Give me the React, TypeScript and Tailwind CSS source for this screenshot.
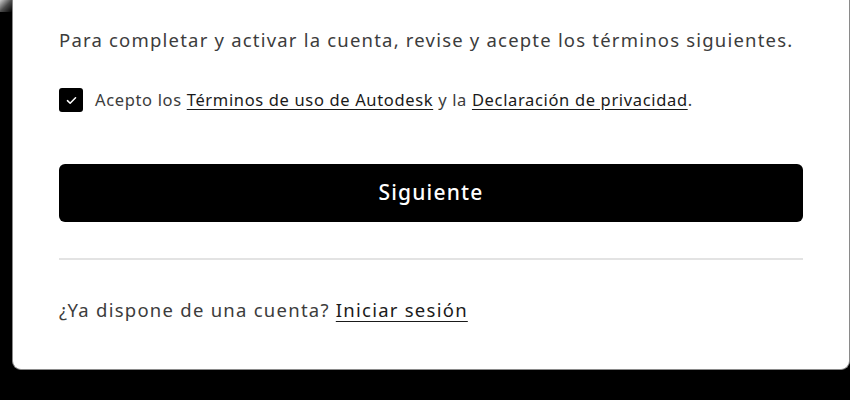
import React from "react";

export default function App() {
  return (
    <div className="w-[850px] h-[400px] bg-black overflow-hidden relative" style={{ fontFamily: '"Noto Sans", "Open Sans", sans-serif' }}>
      <div className="absolute left-0 top-0 w-[12px] h-[12px] bg-gradient-to-br from-white/80 via-white/30 to-transparent" />
      <div className="ml-[12px] mt-[-20px] w-[838px] h-[390px] bg-white rounded-b-[9px] border border-[#8a8a8a] border-t-0 pl-[46px] pr-[45px] pt-[47px]">
        <p className="text-[18.5px] leading-[26px] tracking-[1.2px] text-[#3c3c3c] whitespace-nowrap">
          Para completar y activar la cuenta, revise y acepte los términos siguientes.
        </p>
        <div className="mt-[35px] flex items-center gap-[12px]">
          <div className="w-[24px] h-[24px] rounded-[3px] bg-black flex items-center justify-center shrink-0">
            <svg width="11" height="9" viewBox="0 0 12 10" fill="none">
              <path d="M1.5 5.2 L4.5 8 L10.5 2" stroke="white" strokeWidth="1.7" strokeLinecap="round" strokeLinejoin="round" />
            </svg>
          </div>
          <p className="text-[16.5px] leading-[24px] tracking-[0.65px] text-[#3c3c3c] whitespace-nowrap">
            Acepto los <span className="underline underline-offset-[3px] text-[#1a1a1a]">Términos de uso de Autodesk</span> y la{" "}
            <span className="underline underline-offset-[3px] text-[#1a1a1a]">Declaración de privacidad</span>.
          </p>
        </div>
        <button className="mt-[52px] w-[744px] h-[58px] bg-black rounded-[6px] text-white text-[21px] font-medium tracking-[1.2px] flex items-center justify-center">
          Siguiente
        </button>
        <div className="mt-[36px] w-[744px] h-[2px] bg-[#e3e3e3]" />
        <p className="mt-[37px] text-[18.5px] leading-[26px] tracking-[1.25px] text-[#3c3c3c] whitespace-nowrap">
          ¿Ya dispone de una cuenta? <span className="underline underline-offset-[4px] text-[#1a1a1a]">Iniciar sesión</span>
        </p>
      </div>
    </div>
  );
}
